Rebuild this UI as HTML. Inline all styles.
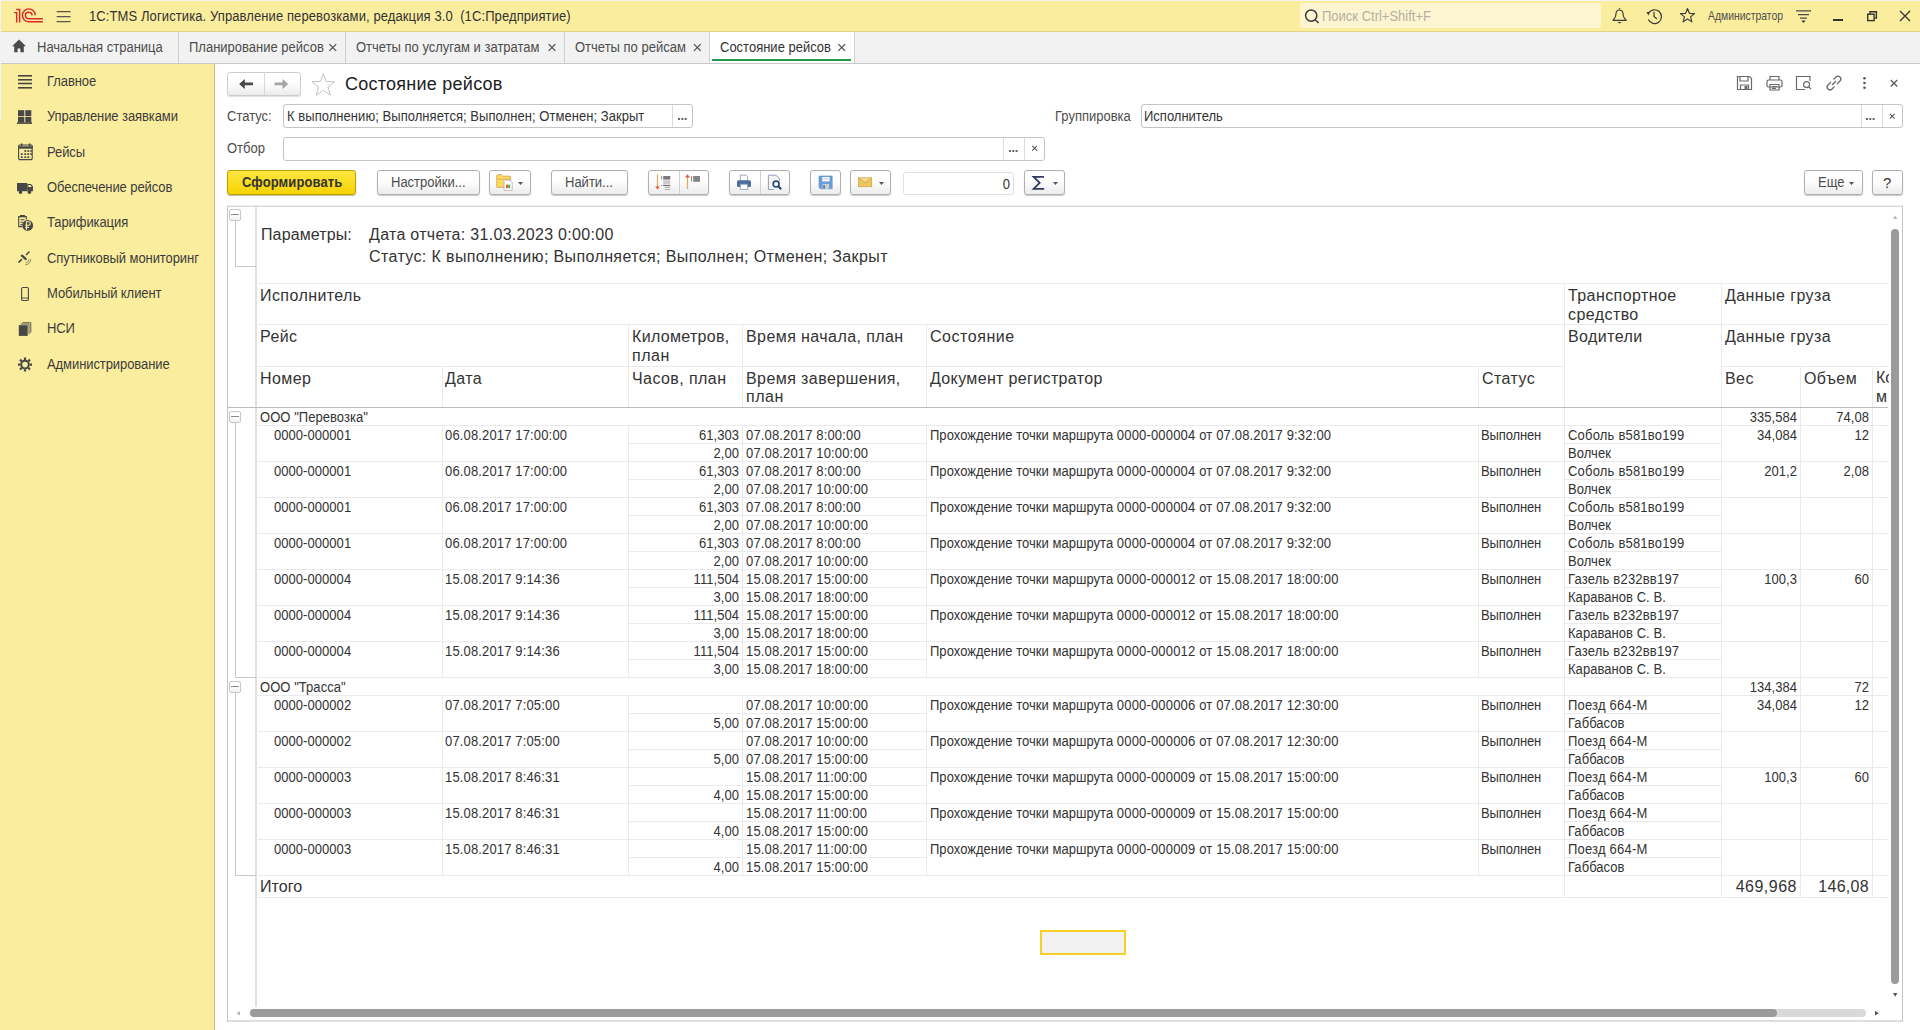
<!DOCTYPE html>
<html><head><meta charset="utf-8"><style>
*{box-sizing:border-box;margin:0;padding:0}
html,body{width:1920px;height:1030px;overflow:hidden;background:#fff;font-family:"Liberation Sans",sans-serif;color:#4d4d4d;font-size:13px}
.a{position:absolute}
svg.a{overflow:visible}
.t{position:absolute;white-space:pre}
.btn{position:absolute;border:1px solid #b0b0b0;border-radius:3px;background:linear-gradient(#ffffff 40%,#ececec);box-shadow:0 1px 1px rgba(0,0,0,.22)}
.inp{position:absolute;border:1px solid #c4c4c4;border-radius:3px;background:#fff}
</style></head><body>
<div class="a" style="left:0px;top:0px;width:1920px;height:32px;background:#fbed9e"></div>
<div class="a" style="left:0px;top:31px;width:1920px;height:1px;background:#e2d28a"></div>
<svg class="a" style="left:0px;top:0px;" width="50" height="32" viewBox="0 0 50 32"><g fill="none" stroke="#dc2a2a" stroke-width="1.45"><path d="M14,12.6 H16.7 V22.6"/><path d="M16.2,9.4 H19.65 V22.6"/><path d="M35.3,15.35 A6.45,6.45 0 1 0 28.85,21.8 H42.9"/><path d="M32,15.5 A3.3,3.3 0 1 0 28.7,18.8 H42.9"/></g></svg>
<svg class="a" style="left:0px;top:0px;" width="80" height="32" viewBox="0 0 80 32"><g stroke="#5a5648" stroke-width="1.25"><path d="M56.7,11.5H70.6M56.7,16.5H70.6M56.7,21.5H70.6"/></g></svg>
<div class="t" style="top:9px;font-size:14px;line-height:14px;color:#333333;left:89px;transform:scaleX(0.928571);transform-origin:0 0;letter-spacing:0.108px;">1C:TMS Логистика. Управление перевозками, редакция 3.0  (1С:Предприятие)</div>
<div class="a" style="left:1300px;top:3px;width:301px;height:25px;background:#fdf5d2;border-radius:3px"></div>
<svg class="a" style="left:1300px;top:0px;" width="30" height="32" viewBox="0 0 30 32"><g fill="none" stroke="#3a3a3a" stroke-width="1.5"><circle cx="11.2" cy="15.6" r="5.6"/><path d="M15.3,19.7 L18.6,23"/></g></svg>
<div class="t" style="top:9px;font-size:14px;line-height:14px;color:#b4b0a0;left:1322px;transform:scaleX(0.928571);transform-origin:0 0;">Поиск Ctrl+Shift+F</div>
<svg class="a" style="left:0px;top:0px;" width="1" height="1" viewBox="0 0 1 1"><g fill="none" stroke="#3a3a3a" stroke-width="1.15" stroke-linejoin="round"><path d="M1613,20.3 L1614.8,17.8 C1615.6,16.6 1615.9,15.5 1616,13.6 C1616.2,11.5 1617.6,10 1619.5,10 C1621.4,10 1622.8,11.5 1623,13.6 C1623.1,15.5 1623.4,16.6 1624.2,17.8 L1626.2,20.3 Z"/></g><path d="M1618.5,8.2 L1620.5,8.2 L1619.5,9.6Z" fill="#3a3a3a"/><path d="M1617.2,22.1 H1621.8 L1619.5,23.4Z" fill="#3a3a3a"/></svg>
<svg class="a" style="left:0px;top:0px;" width="1" height="1" viewBox="0 0 1 1"><g fill="none" stroke="#3a3a3a" stroke-width="1.2"><path d="M1648.6,13.2 A6.9,6.9 0 1 1 1648.3,19.6"/><path d="M1654,11.8 V16.4 L1656.9,19"/></g><path d="M1646.2,12.6 L1649.8,11.6 L1648.8,15.2Z" fill="#3a3a3a"/></svg>
<svg class="a" style="left:0px;top:0px;" width="1" height="1" viewBox="0 0 1 1"><polygon points="1687.50,8.50 1689.38,13.31 1694.54,13.61 1690.54,16.89 1691.85,21.89 1687.50,19.10 1683.15,21.89 1684.46,16.89 1680.46,13.61 1685.62,13.31" fill="none" stroke="#3a3a3a" stroke-width="1.15" stroke-linejoin="round"/></svg>
<div class="t" style="top:9px;font-size:13px;line-height:13px;color:#4d4d4d;left:1708px;transform:scaleX(0.80);transform-origin:0 0;">Администратор</div>
<svg class="a" style="left:1790px;top:0px;" width="30" height="32" viewBox="0 0 30 32"><g stroke="#4a4a4a" stroke-width="1.3"><path d="M6,10.8H21M8,14.6H19M10,18.2H17"/></g><path d="M11.3,20.6 h4.4 l-2.2,2.4z" fill="#3a3a3a"/></svg>
<div class="a" style="left:1833px;top:19px;width:10px;height:2px;background:#333"></div>
<svg class="a" style="left:1860px;top:0px;" width="30" height="32" viewBox="0 0 30 32"><g fill="none" stroke="#333" stroke-width="1.4"><rect x="7.7" y="14.2" width="6.4" height="6.4"/><path d="M10,14 V11.7 H16.4 V18.1 H14.2"/></g></svg>
<svg class="a" style="left:1895px;top:0px;" width="30" height="32" viewBox="0 0 30 32"><g stroke="#333" stroke-width="1.3"><path d="M5,11 L15,21 M15,11 L5,21"/></g></svg>
<div class="a" style="left:0px;top:32px;width:1920px;height:32px;background:#f2f2f2"></div>
<div class="a" style="left:0px;top:63px;width:1920px;height:1px;background:#c8c8c8"></div>
<svg class="a" style="left:0px;top:32px;" width="40" height="32" viewBox="0 0 40 32"><path d="M19,7.5 L12,14.3 H14.2 V20.2 H17.6 V16.6 H20.4 V20.2 H23.8 V14.3 H26 Z" fill="#4a4a4a"/></svg>
<div class="t" style="top:40px;font-size:14px;line-height:14px;color:#4d4d4d;left:37px;transform:scaleX(0.928571);transform-origin:0 0;">Начальная страница</div>
<div class="a" style="left:710px;top:32px;width:144px;height:31px;background:#ffffff"></div>
<div class="a" style="left:178px;top:32px;width:1px;height:31px;background:#cfcfcf"></div>
<div class="a" style="left:345px;top:32px;width:1px;height:31px;background:#cfcfcf"></div>
<div class="a" style="left:564px;top:32px;width:1px;height:31px;background:#cfcfcf"></div>
<div class="a" style="left:709px;top:32px;width:1px;height:31px;background:#cfcfcf"></div>
<div class="a" style="left:854px;top:32px;width:1px;height:31px;background:#cfcfcf"></div>
<div class="t" style="top:40px;font-size:14px;line-height:14px;color:#4d4d4d;left:189px;transform:scaleX(0.928571);transform-origin:0 0;">Планирование рейсов</div>
<div class="t" style="top:40px;font-size:14px;line-height:14px;color:#4d4d4d;left:356px;transform:scaleX(0.928571);transform-origin:0 0;">Отчеты по услугам и затратам</div>
<div class="t" style="top:40px;font-size:14px;line-height:14px;color:#4d4d4d;left:575px;transform:scaleX(0.928571);transform-origin:0 0;">Отчеты по рейсам</div>
<div class="t" style="top:40px;font-size:14px;line-height:14px;color:#333333;left:720px;transform:scaleX(0.928571);transform-origin:0 0;">Состояние рейсов</div>
<svg class="a" style="left:322px;top:37px;" width="20" height="20" viewBox="0 0 20 20"><path d="M7.400000000000011,7.1 l6.8,6.8 M14.200000000000012,7.1 l-6.8,6.8" stroke="#505050" stroke-width="1.25"/></svg>
<svg class="a" style="left:542px;top:37px;" width="20" height="20" viewBox="0 0 20 20"><path d="M6.6,7.1 l6.8,6.8 M13.4,7.1 l-6.8,6.8" stroke="#505050" stroke-width="1.25"/></svg>
<svg class="a" style="left:687px;top:37px;" width="20" height="20" viewBox="0 0 20 20"><path d="M6.899999999999954,7.1 l6.8,6.8 M13.699999999999955,7.1 l-6.8,6.8" stroke="#505050" stroke-width="1.25"/></svg>
<svg class="a" style="left:831px;top:37px;" width="20" height="20" viewBox="0 0 20 20"><path d="M7.300000000000045,7.1 l6.8,6.8 M14.100000000000046,7.1 l-6.8,6.8" stroke="#505050" stroke-width="1.25"/></svg>
<div class="a" style="left:712px;top:59px;width:139px;height:2px;background:#1f9a4a"></div>
<div class="a" style="left:0px;top:64px;width:214px;height:966px;background:#fbed9e"></div>
<div class="a" style="left:214px;top:64px;width:1px;height:966px;background:#cdbd7c"></div>
<div class="t" style="top:74px;font-size:14px;line-height:14px;color:#3c3c3c;left:47px;transform:scaleX(0.928571);transform-origin:0 0;letter-spacing:-0.086px;">Главное</div>
<div class="t" style="top:109px;font-size:14px;line-height:14px;color:#3c3c3c;left:47px;transform:scaleX(0.928571);transform-origin:0 0;letter-spacing:-0.086px;">Управление заявками</div>
<div class="t" style="top:145px;font-size:14px;line-height:14px;color:#3c3c3c;left:47px;transform:scaleX(0.928571);transform-origin:0 0;letter-spacing:-0.086px;">Рейсы</div>
<div class="t" style="top:180px;font-size:14px;line-height:14px;color:#3c3c3c;left:47px;transform:scaleX(0.928571);transform-origin:0 0;letter-spacing:-0.086px;">Обеспечение рейсов</div>
<div class="t" style="top:215px;font-size:14px;line-height:14px;color:#3c3c3c;left:47px;transform:scaleX(0.928571);transform-origin:0 0;letter-spacing:-0.086px;">Тарификация</div>
<div class="t" style="top:251px;font-size:14px;line-height:14px;color:#3c3c3c;left:47px;transform:scaleX(0.928571);transform-origin:0 0;letter-spacing:-0.086px;">Спутниковый мониторинг</div>
<div class="t" style="top:286px;font-size:14px;line-height:14px;color:#3c3c3c;left:47px;transform:scaleX(0.928571);transform-origin:0 0;letter-spacing:-0.086px;">Мобильный клиент</div>
<div class="t" style="top:321px;font-size:14px;line-height:14px;color:#3c3c3c;left:47px;transform:scaleX(0.928571);transform-origin:0 0;letter-spacing:-0.086px;">НСИ</div>
<div class="t" style="top:357px;font-size:14px;line-height:14px;color:#3c3c3c;left:47px;transform:scaleX(0.928571);transform-origin:0 0;letter-spacing:-0.086px;">Администрирование</div>
<div class="btn" style="left:227px;top:71.5px;width:74px;height:24.5px;border-color:#cdcdcd;box-shadow:0 1px 1px rgba(0,0,0,.12)"></div>
<div class="a" style="left:264px;top:72px;width:1px;height:23px;background:#d8d8d8"></div>
<svg class="a" style="left:227px;top:72px;" width="74" height="24" viewBox="0 0 74 24"><path d="M12.1,11.9 L17.8,6.9 V10.55 H26 V13.25 H17.8 V16.9 Z" fill="#4a4a4a"/><path d="M61.2,11.9 L55.5,6.9 V10.55 H47.5 V13.25 H55.5 V16.9 Z" fill="#a4a4a4"/></svg>
<svg class="a" style="left:0px;top:0px;" width="1" height="1" viewBox="0 0 1 1"><polygon points="323.30,73.50 326.18,81.44 334.62,81.72 327.96,86.91 330.29,95.03 323.30,90.30 316.31,95.03 318.64,86.91 311.98,81.72 320.42,81.44" fill="none" stroke="#c4c4c4" stroke-width="1"/></svg>
<div class="t" style="top:75px;font-size:18px;line-height:18px;color:#1c1c1c;left:345px;letter-spacing:0.250px;">Состояние рейсов</div>
<svg class="a" style="left:1730px;top:70px;" width="30" height="26" viewBox="0 0 30 26"><g fill="none" stroke="#6a6a6a" stroke-width="1.2"><path d="M7.5,6.5 H19.5 L21.5,8.5 V19.5 H7.5 Z"/><path d="M10,6.5 V11 H18 V6.5"/><path d="M10.5,19.5 V15 H18.5 V19.5"/></g><rect x="14.5" y="16" width="3" height="3" fill="#6a6a6a"/></svg>
<svg class="a" style="left:1760px;top:70px;" width="30" height="26" viewBox="0 0 30 26"><g fill="none" stroke="#6a6a6a" stroke-width="1.2"><path d="M10,10 V6.5 H19 V10"/><rect x="7" y="10" width="15" height="7" rx="1.5"/><path d="M10,14.5 H19 V20 H10 Z"/><path d="M12,16.5 H17 M12,18.3 H16"/></g></svg>
<svg class="a" style="left:1790px;top:70px;" width="30" height="26" viewBox="0 0 30 26"><g fill="none" stroke="#6a6a6a" stroke-width="1.2"><path d="M15,19.5 H6.5 V6.5 H20 V11"/><circle cx="16.6" cy="14.6" r="3"/><path d="M18.8,16.8 L21,19"/></g></svg>
<svg class="a" style="left:1820px;top:70px;" width="30" height="26" viewBox="0 0 30 26"><g fill="none" stroke="#6a6a6a" stroke-width="1.3"><path d="M13.5,9.5 L16,7 A2.6,2.6 0 0 1 20,11 L17,14"/><path d="M14.5,16.5 L12,19 A2.6,2.6 0 0 1 8,15 L11,12"/><path d="M12,15 L16,11"/></g></svg>
<svg class="a" style="left:1855px;top:70px;" width="20" height="26" viewBox="0 0 20 26"><g fill="#555"><circle cx="9.5" cy="8.2" r="1.3"/><circle cx="9.5" cy="13" r="1.3"/><circle cx="9.5" cy="17.8" r="1.3"/></g></svg>
<svg class="a" style="left:1884px;top:70px;" width="20" height="26" viewBox="0 0 20 26"><path d="M6.8,10 L13.2,16.5 M13.2,10 L6.8,16.5" stroke="#555" stroke-width="1.2"/></svg>
<div class="t" style="top:109px;font-size:14px;line-height:14px;color:#4d4d4d;left:227px;transform:scaleX(0.928571);transform-origin:0 0;">Статус:</div>
<div class="inp" style="left:283px;top:104px;width:410px;height:24px;"></div>
<div class="a" style="left:672px;top:105px;width:1px;height:22px;background:#dcdcdc"></div>
<div class="t" style="top:109px;font-size:14px;line-height:14px;color:#333333;left:287px;transform:scaleX(0.928571);transform-origin:0 0;letter-spacing:0.054px;">К выполнению; Выполняется; Выполнен; Отменен; Закрыт</div>
<svg class="a" style="left:678px;top:118px;" width="12" height="4" viewBox="0 0 12 4"><g fill="#666"><rect x="0" y="0" width="2" height="2"/><rect x="3.3" y="0" width="2" height="2"/><rect x="6.6" y="0" width="2" height="2"/></g></svg>
<div class="t" style="top:109px;font-size:14px;line-height:14px;color:#4d4d4d;left:1055px;transform:scaleX(0.928571);transform-origin:0 0;">Группировка</div>
<div class="inp" style="left:1141px;top:104px;width:762px;height:24px;"></div>
<div class="a" style="left:1861px;top:105px;width:1px;height:22px;background:#dcdcdc"></div>
<div class="a" style="left:1882px;top:105px;width:1px;height:22px;background:#dcdcdc"></div>
<div class="t" style="top:109px;font-size:14px;line-height:14px;color:#333333;left:1144px;transform:scaleX(0.928571);transform-origin:0 0;">Исполнитель</div>
<svg class="a" style="left:1866px;top:118px;" width="12" height="4" viewBox="0 0 12 4"><g fill="#666"><rect x="0" y="0" width="2" height="2"/><rect x="3.3" y="0" width="2" height="2"/><rect x="6.6" y="0" width="2" height="2"/></g></svg>
<svg class="a" style="left:1882px;top:105px;" width="21" height="23" viewBox="0 0 21 23"><path d="M7.8,8.8 L12.6,13.6 M12.6,8.8 L7.8,13.6" stroke="#555" stroke-width="1.1"/></svg>
<div class="t" style="top:141px;font-size:14px;line-height:14px;color:#4d4d4d;left:227px;transform:scaleX(0.928571);transform-origin:0 0;">Отбор</div>
<div class="inp" style="left:283px;top:137px;width:762px;height:24px;"></div>
<div class="a" style="left:1003px;top:138px;width:1px;height:22px;background:#dcdcdc"></div>
<div class="a" style="left:1024px;top:138px;width:1px;height:22px;background:#dcdcdc"></div>
<svg class="a" style="left:1009px;top:150px;" width="12" height="4" viewBox="0 0 12 4"><g fill="#666"><rect x="0" y="0" width="2" height="2"/><rect x="3.3" y="0" width="2" height="2"/><rect x="6.6" y="0" width="2" height="2"/></g></svg>
<svg class="a" style="left:1024px;top:137px;" width="21" height="23" viewBox="0 0 21 23"><path d="M8.2,8.8 L13,13.6 M13,8.8 L8.2,13.6" stroke="#555" stroke-width="1.1"/></svg>
<div class="a" style="left:227px;top:170px;width:129px;height:25px;border:1px solid #b9a000;border-radius:3px;background:linear-gradient(#ffe641,#f5d300);box-shadow:0 1px 1px rgba(80,70,0,.35)"></div>
<div class="t" style="top:175px;font-size:14px;line-height:14px;color:#333333;left:242px;transform:scaleX(0.928571);transform-origin:0 0;font-weight:bold;letter-spacing:0.129px;">Сформировать</div>
<div class="btn" style="left:377px;top:170px;width:103px;height:25px;"></div>
<div class="t" style="top:175px;font-size:14px;line-height:14px;color:#4d4d4d;left:391px;transform:scaleX(0.928571);transform-origin:0 0;">Настройки...</div>
<div class="btn" style="left:489px;top:170px;width:42px;height:25px;"></div>
<div class="btn" style="left:551px;top:170px;width:77px;height:25px;"></div>
<div class="t" style="top:175px;font-size:14px;line-height:14px;color:#4d4d4d;left:565px;transform:scaleX(0.928571);transform-origin:0 0;">Найти...</div>
<div class="btn" style="left:648px;top:170px;width:61px;height:25px;"></div>
<div class="a" style="left:679px;top:171px;width:1px;height:23px;background:#d0d0d0"></div>
<div class="btn" style="left:729px;top:170px;width:61px;height:25px;"></div>
<div class="a" style="left:760px;top:171px;width:1px;height:23px;background:#d0d0d0"></div>
<div class="btn" style="left:810px;top:170px;width:31px;height:25px;"></div>
<div class="btn" style="left:850px;top:170px;width:41px;height:25px;"></div>
<div class="inp" style="left:903px;top:172px;width:111px;height:23px;border-color:#e0e0e0"></div>
<div class="t" style="top:177px;font-size:14px;line-height:14px;color:#333333;left:410px;width:600px;text-align:right;transform:scaleX(0.928571);transform-origin:100% 0;">0</div>
<div class="btn" style="left:1024px;top:170px;width:41px;height:25px;"></div>
<div class="btn" style="left:1804px;top:170px;width:59px;height:25px;"></div>
<div class="t" style="top:175px;font-size:14px;line-height:14px;color:#4d4d4d;left:1818px;transform:scaleX(0.928571);transform-origin:0 0;">Еще</div>
<div class="btn" style="left:1872px;top:170px;width:31px;height:25px;"></div>
<div class="t" style="top:175px;font-size:15px;line-height:15px;color:#333333;left:1883px;">?</div>
<svg class="a" style="left:518px;top:182px;" width="6" height="4" viewBox="0 0 6 4"><path d="M0,0 H5 L2.5,3z" fill="#555"/></svg>
<svg class="a" style="left:879px;top:182px;" width="6" height="4" viewBox="0 0 6 4"><path d="M0,0 H5 L2.5,3z" fill="#555"/></svg>
<svg class="a" style="left:1053px;top:182px;" width="6" height="4" viewBox="0 0 6 4"><path d="M0,0 H5 L2.5,3z" fill="#555"/></svg>
<svg class="a" style="left:1849px;top:182px;" width="6" height="4" viewBox="0 0 6 4"><path d="M0,0 H5 L2.5,3z" fill="#555"/></svg>
<svg class="a" style="left:0px;top:0px;" width="1" height="1" viewBox="0 0 1 1"><path d="M1044,176.8 H1033.6 L1039.7,182.8 L1033.6,188.9 H1044.2" fill="none" stroke="#2d3c5e" stroke-width="1.8" stroke-linejoin="miter"/></svg>
<div class="a" style="left:227px;top:206px;width:676px;height:0px;"></div>
<div class="a" style="left:227px;top:206px;width:676px;height:816px;"></div>
<div class="a" style="left:227px;top:205px;width:1676px;height:1px;background:#ececec"></div>
<div class="a" style="left:227px;top:206px;width:1676px;height:1px;background:#d9d9d9"></div>
<div class="a" style="left:227px;top:1020px;width:1676px;height:2px;background:#dedede"></div>
<div class="a" style="left:227px;top:206px;width:1px;height:816px;background:#c4c4c4"></div>
<div class="a" style="left:1902px;top:206px;width:1px;height:816px;background:#c4c4c4"></div>
<div class="a" style="left:255px;top:207px;width:2px;height:800px;background:#e0e0e0"></div>
<div class="t" style="top:227px;font-size:16px;line-height:16px;color:#333333;left:261px;letter-spacing:0.120px;">Параметры:</div>
<div class="t" style="top:227px;font-size:16px;line-height:16px;color:#333333;left:369px;letter-spacing:0.300px;">Дата отчета: 31.03.2023 0:00:00</div>
<div class="t" style="top:249px;font-size:16px;line-height:16px;color:#333333;left:369px;letter-spacing:0.380px;">Статус: К выполнению; Выполняется; Выполнен; Отменен; Закрыт</div>
<div class="a" style="left:256px;top:283px;width:1632px;height:1px;background:#eaeaea"></div>
<div class="a" style="left:256px;top:324px;width:1632px;height:1px;background:#eaeaea"></div>
<div class="a" style="left:256px;top:366px;width:1308px;height:1px;background:#eaeaea"></div>
<div class="a" style="left:1721px;top:366px;width:167px;height:1px;background:#eaeaea"></div>
<div class="a" style="left:228px;top:407px;width:1660px;height:1px;background:#bdbdbd"></div>
<div class="a" style="left:1564px;top:283px;width:1px;height:124px;background:#eaeaea"></div>
<div class="a" style="left:1721px;top:283px;width:1px;height:124px;background:#eaeaea"></div>
<div class="a" style="left:628px;top:324px;width:1px;height:83px;background:#eaeaea"></div>
<div class="a" style="left:742px;top:324px;width:1px;height:83px;background:#eaeaea"></div>
<div class="a" style="left:926px;top:324px;width:1px;height:83px;background:#eaeaea"></div>
<div class="a" style="left:442px;top:366px;width:1px;height:41px;background:#eaeaea"></div>
<div class="a" style="left:1478px;top:366px;width:1px;height:41px;background:#eaeaea"></div>
<div class="a" style="left:1800px;top:366px;width:1px;height:41px;background:#eaeaea"></div>
<div class="a" style="left:1872px;top:366px;width:1px;height:41px;background:#eaeaea"></div>
<div class="t" style="top:288px;font-size:16px;line-height:16px;color:#333333;left:260px;letter-spacing:0.420px;">Исполнитель</div>
<div class="t" style="top:288px;font-size:16px;line-height:16px;color:#333333;left:1568px;letter-spacing:0.420px;">Транспортное</div>
<div class="t" style="top:307px;font-size:16px;line-height:16px;color:#333333;left:1568px;letter-spacing:0.420px;">средство</div>
<div class="t" style="top:288px;font-size:16px;line-height:16px;color:#333333;left:1725px;letter-spacing:0.420px;">Данные груза</div>
<div class="t" style="top:329px;font-size:16px;line-height:16px;color:#333333;left:260px;letter-spacing:0.420px;">Рейс</div>
<div class="t" style="top:329px;font-size:16px;line-height:16px;color:#333333;left:632px;letter-spacing:0.320px;">Километров,</div>
<div class="t" style="top:348px;font-size:16px;line-height:16px;color:#333333;left:632px;letter-spacing:0.550px;">план</div>
<div class="t" style="top:329px;font-size:16px;line-height:16px;color:#333333;left:746px;letter-spacing:0.420px;">Время начала, план</div>
<div class="t" style="top:329px;font-size:16px;line-height:16px;color:#333333;left:930px;letter-spacing:0.540px;">Состояние</div>
<div class="t" style="top:329px;font-size:16px;line-height:16px;color:#333333;left:1568px;letter-spacing:0.420px;">Водители</div>
<div class="t" style="top:329px;font-size:16px;line-height:16px;color:#333333;left:1725px;letter-spacing:0.420px;">Данные груза</div>
<div class="t" style="top:371px;font-size:16px;line-height:16px;color:#333333;left:260px;letter-spacing:0.420px;">Номер</div>
<div class="t" style="top:371px;font-size:16px;line-height:16px;color:#333333;left:445px;letter-spacing:0.420px;">Дата</div>
<div class="t" style="top:371px;font-size:16px;line-height:16px;color:#333333;left:632px;letter-spacing:0.420px;">Часов, план</div>
<div class="t" style="top:371px;font-size:16px;line-height:16px;color:#333333;left:746px;letter-spacing:0.420px;">Время завершения,</div>
<div class="t" style="top:389px;font-size:16px;line-height:16px;color:#333333;left:746px;letter-spacing:0.550px;">план</div>
<div class="t" style="top:371px;font-size:16px;line-height:16px;color:#333333;left:930px;letter-spacing:0.350px;">Документ регистратор</div>
<div class="t" style="top:371px;font-size:16px;line-height:16px;color:#333333;left:1482px;letter-spacing:0.420px;">Статус</div>
<div class="t" style="top:371px;font-size:16px;line-height:16px;color:#333333;left:1725px;letter-spacing:0.420px;">Вес</div>
<div class="t" style="top:371px;font-size:16px;line-height:16px;color:#333333;left:1804px;letter-spacing:0.420px;">Объем</div>
<div class="a" style="left:1872px;top:366px;width:16.5px;height:41px;overflow:hidden"><div class="t" style="left:4px;top:4px;font-size:16px;line-height:16px;color:#333">Ко</div><div class="t" style="left:4px;top:23px;font-size:16px;line-height:16px;color:#333">м</div></div>
<div class="a" style="left:1564px;top:408px;width:1px;height:17px;background:#eaeaea"></div>
<div class="a" style="left:1721px;top:408px;width:1px;height:17px;background:#eaeaea"></div>
<div class="a" style="left:1800px;top:408px;width:1px;height:17px;background:#eaeaea"></div>
<div class="a" style="left:1872px;top:408px;width:1px;height:17px;background:#eaeaea"></div>
<div class="t" style="top:410px;font-size:14px;line-height:14px;color:#333333;left:260px;transform:scaleX(0.928571);transform-origin:0 0;letter-spacing:0.054px;">ООО "Перевозка"</div>
<div class="t" style="top:410px;font-size:14px;line-height:14px;color:#333333;left:1197px;width:600px;text-align:right;transform:scaleX(0.928571);transform-origin:100% 0;letter-spacing:0.054px;">335,584</div>
<div class="t" style="top:410px;font-size:14px;line-height:14px;color:#333333;left:1269px;width:600px;text-align:right;transform:scaleX(0.928571);transform-origin:100% 0;letter-spacing:0.054px;">74,08</div>
<div class="a" style="left:256px;top:425px;width:1632px;height:1px;background:#eaeaea"></div>
<div class="a" style="left:442px;top:426px;width:1px;height:35px;background:#eaeaea"></div>
<div class="a" style="left:628px;top:426px;width:1px;height:35px;background:#eaeaea"></div>
<div class="a" style="left:742px;top:426px;width:1px;height:35px;background:#eaeaea"></div>
<div class="a" style="left:926px;top:426px;width:1px;height:35px;background:#eaeaea"></div>
<div class="a" style="left:1478px;top:426px;width:1px;height:35px;background:#eaeaea"></div>
<div class="a" style="left:1564px;top:426px;width:1px;height:35px;background:#eaeaea"></div>
<div class="a" style="left:1721px;top:426px;width:1px;height:35px;background:#eaeaea"></div>
<div class="a" style="left:1800px;top:426px;width:1px;height:35px;background:#eaeaea"></div>
<div class="a" style="left:1872px;top:426px;width:1px;height:35px;background:#eaeaea"></div>
<div class="a" style="left:628px;top:443px;width:298px;height:1px;background:#eaeaea"></div>
<div class="a" style="left:1564px;top:443px;width:157px;height:1px;background:#eaeaea"></div>
<div class="t" style="top:428px;font-size:14px;line-height:14px;color:#333333;left:274px;transform:scaleX(0.928571);transform-origin:0 0;letter-spacing:0.054px;">0000-000001</div>
<div class="t" style="top:428px;font-size:14px;line-height:14px;color:#333333;left:445px;transform:scaleX(0.928571);transform-origin:0 0;letter-spacing:0.162px;">06.08.2017 17:00:00</div>
<div class="t" style="top:428px;font-size:14px;line-height:14px;color:#333333;left:139px;width:600px;text-align:right;transform:scaleX(0.928571);transform-origin:100% 0;letter-spacing:0.054px;">61,303</div>
<div class="t" style="top:446px;font-size:14px;line-height:14px;color:#333333;left:139px;width:600px;text-align:right;transform:scaleX(0.928571);transform-origin:100% 0;letter-spacing:0.054px;">2,00</div>
<div class="t" style="top:428px;font-size:14px;line-height:14px;color:#333333;left:746px;transform:scaleX(0.928571);transform-origin:0 0;letter-spacing:0.162px;">07.08.2017 8:00:00</div>
<div class="t" style="top:446px;font-size:14px;line-height:14px;color:#333333;left:746px;transform:scaleX(0.928571);transform-origin:0 0;letter-spacing:0.162px;">07.08.2017 10:00:00</div>
<div class="t" style="top:428px;font-size:14px;line-height:14px;color:#333333;left:930px;transform:scaleX(0.928571);transform-origin:0 0;"><span style="letter-spacing:0.032px">Прохождение точки маршрута </span><span style="letter-spacing:0.183px">0000-000004 от 07.08.2017 9:32:00</span></div>
<div class="t" style="top:428px;font-size:14px;line-height:14px;color:#333333;left:1481px;transform:scaleX(0.928571);transform-origin:0 0;letter-spacing:-0.140px;">Выполнен</div>
<div class="t" style="top:428px;font-size:14px;line-height:14px;color:#333333;left:1568px;transform:scaleX(0.928571);transform-origin:0 0;letter-spacing:0.215px;">Соболь в581во199</div>
<div class="t" style="top:446px;font-size:14px;line-height:14px;color:#333333;left:1568px;transform:scaleX(0.928571);transform-origin:0 0;letter-spacing:0.054px;">Волчек</div>
<div class="t" style="top:428px;font-size:14px;line-height:14px;color:#333333;left:1197px;width:600px;text-align:right;transform:scaleX(0.928571);transform-origin:100% 0;letter-spacing:0.054px;">34,084</div>
<div class="t" style="top:428px;font-size:14px;line-height:14px;color:#333333;left:1269px;width:600px;text-align:right;transform:scaleX(0.928571);transform-origin:100% 0;letter-spacing:0.054px;">12</div>
<div class="a" style="left:256px;top:461px;width:1632px;height:1px;background:#eaeaea"></div>
<div class="a" style="left:442px;top:462px;width:1px;height:35px;background:#eaeaea"></div>
<div class="a" style="left:628px;top:462px;width:1px;height:35px;background:#eaeaea"></div>
<div class="a" style="left:742px;top:462px;width:1px;height:35px;background:#eaeaea"></div>
<div class="a" style="left:926px;top:462px;width:1px;height:35px;background:#eaeaea"></div>
<div class="a" style="left:1478px;top:462px;width:1px;height:35px;background:#eaeaea"></div>
<div class="a" style="left:1564px;top:462px;width:1px;height:35px;background:#eaeaea"></div>
<div class="a" style="left:1721px;top:462px;width:1px;height:35px;background:#eaeaea"></div>
<div class="a" style="left:1800px;top:462px;width:1px;height:35px;background:#eaeaea"></div>
<div class="a" style="left:1872px;top:462px;width:1px;height:35px;background:#eaeaea"></div>
<div class="a" style="left:628px;top:479px;width:298px;height:1px;background:#eaeaea"></div>
<div class="a" style="left:1564px;top:479px;width:157px;height:1px;background:#eaeaea"></div>
<div class="t" style="top:464px;font-size:14px;line-height:14px;color:#333333;left:274px;transform:scaleX(0.928571);transform-origin:0 0;letter-spacing:0.054px;">0000-000001</div>
<div class="t" style="top:464px;font-size:14px;line-height:14px;color:#333333;left:445px;transform:scaleX(0.928571);transform-origin:0 0;letter-spacing:0.162px;">06.08.2017 17:00:00</div>
<div class="t" style="top:464px;font-size:14px;line-height:14px;color:#333333;left:139px;width:600px;text-align:right;transform:scaleX(0.928571);transform-origin:100% 0;letter-spacing:0.054px;">61,303</div>
<div class="t" style="top:482px;font-size:14px;line-height:14px;color:#333333;left:139px;width:600px;text-align:right;transform:scaleX(0.928571);transform-origin:100% 0;letter-spacing:0.054px;">2,00</div>
<div class="t" style="top:464px;font-size:14px;line-height:14px;color:#333333;left:746px;transform:scaleX(0.928571);transform-origin:0 0;letter-spacing:0.162px;">07.08.2017 8:00:00</div>
<div class="t" style="top:482px;font-size:14px;line-height:14px;color:#333333;left:746px;transform:scaleX(0.928571);transform-origin:0 0;letter-spacing:0.162px;">07.08.2017 10:00:00</div>
<div class="t" style="top:464px;font-size:14px;line-height:14px;color:#333333;left:930px;transform:scaleX(0.928571);transform-origin:0 0;"><span style="letter-spacing:0.032px">Прохождение точки маршрута </span><span style="letter-spacing:0.183px">0000-000004 от 07.08.2017 9:32:00</span></div>
<div class="t" style="top:464px;font-size:14px;line-height:14px;color:#333333;left:1481px;transform:scaleX(0.928571);transform-origin:0 0;letter-spacing:-0.140px;">Выполнен</div>
<div class="t" style="top:464px;font-size:14px;line-height:14px;color:#333333;left:1568px;transform:scaleX(0.928571);transform-origin:0 0;letter-spacing:0.215px;">Соболь в581во199</div>
<div class="t" style="top:482px;font-size:14px;line-height:14px;color:#333333;left:1568px;transform:scaleX(0.928571);transform-origin:0 0;letter-spacing:0.054px;">Волчек</div>
<div class="t" style="top:464px;font-size:14px;line-height:14px;color:#333333;left:1197px;width:600px;text-align:right;transform:scaleX(0.928571);transform-origin:100% 0;letter-spacing:0.054px;">201,2</div>
<div class="t" style="top:464px;font-size:14px;line-height:14px;color:#333333;left:1269px;width:600px;text-align:right;transform:scaleX(0.928571);transform-origin:100% 0;letter-spacing:0.054px;">2,08</div>
<div class="a" style="left:256px;top:497px;width:1632px;height:1px;background:#eaeaea"></div>
<div class="a" style="left:442px;top:498px;width:1px;height:35px;background:#eaeaea"></div>
<div class="a" style="left:628px;top:498px;width:1px;height:35px;background:#eaeaea"></div>
<div class="a" style="left:742px;top:498px;width:1px;height:35px;background:#eaeaea"></div>
<div class="a" style="left:926px;top:498px;width:1px;height:35px;background:#eaeaea"></div>
<div class="a" style="left:1478px;top:498px;width:1px;height:35px;background:#eaeaea"></div>
<div class="a" style="left:1564px;top:498px;width:1px;height:35px;background:#eaeaea"></div>
<div class="a" style="left:1721px;top:498px;width:1px;height:35px;background:#eaeaea"></div>
<div class="a" style="left:1800px;top:498px;width:1px;height:35px;background:#eaeaea"></div>
<div class="a" style="left:1872px;top:498px;width:1px;height:35px;background:#eaeaea"></div>
<div class="a" style="left:628px;top:515px;width:298px;height:1px;background:#eaeaea"></div>
<div class="a" style="left:1564px;top:515px;width:157px;height:1px;background:#eaeaea"></div>
<div class="t" style="top:500px;font-size:14px;line-height:14px;color:#333333;left:274px;transform:scaleX(0.928571);transform-origin:0 0;letter-spacing:0.054px;">0000-000001</div>
<div class="t" style="top:500px;font-size:14px;line-height:14px;color:#333333;left:445px;transform:scaleX(0.928571);transform-origin:0 0;letter-spacing:0.162px;">06.08.2017 17:00:00</div>
<div class="t" style="top:500px;font-size:14px;line-height:14px;color:#333333;left:139px;width:600px;text-align:right;transform:scaleX(0.928571);transform-origin:100% 0;letter-spacing:0.054px;">61,303</div>
<div class="t" style="top:518px;font-size:14px;line-height:14px;color:#333333;left:139px;width:600px;text-align:right;transform:scaleX(0.928571);transform-origin:100% 0;letter-spacing:0.054px;">2,00</div>
<div class="t" style="top:500px;font-size:14px;line-height:14px;color:#333333;left:746px;transform:scaleX(0.928571);transform-origin:0 0;letter-spacing:0.162px;">07.08.2017 8:00:00</div>
<div class="t" style="top:518px;font-size:14px;line-height:14px;color:#333333;left:746px;transform:scaleX(0.928571);transform-origin:0 0;letter-spacing:0.162px;">07.08.2017 10:00:00</div>
<div class="t" style="top:500px;font-size:14px;line-height:14px;color:#333333;left:930px;transform:scaleX(0.928571);transform-origin:0 0;"><span style="letter-spacing:0.032px">Прохождение точки маршрута </span><span style="letter-spacing:0.183px">0000-000004 от 07.08.2017 9:32:00</span></div>
<div class="t" style="top:500px;font-size:14px;line-height:14px;color:#333333;left:1481px;transform:scaleX(0.928571);transform-origin:0 0;letter-spacing:-0.140px;">Выполнен</div>
<div class="t" style="top:500px;font-size:14px;line-height:14px;color:#333333;left:1568px;transform:scaleX(0.928571);transform-origin:0 0;letter-spacing:0.215px;">Соболь в581во199</div>
<div class="t" style="top:518px;font-size:14px;line-height:14px;color:#333333;left:1568px;transform:scaleX(0.928571);transform-origin:0 0;letter-spacing:0.054px;">Волчек</div>
<div class="a" style="left:256px;top:533px;width:1632px;height:1px;background:#eaeaea"></div>
<div class="a" style="left:442px;top:534px;width:1px;height:35px;background:#eaeaea"></div>
<div class="a" style="left:628px;top:534px;width:1px;height:35px;background:#eaeaea"></div>
<div class="a" style="left:742px;top:534px;width:1px;height:35px;background:#eaeaea"></div>
<div class="a" style="left:926px;top:534px;width:1px;height:35px;background:#eaeaea"></div>
<div class="a" style="left:1478px;top:534px;width:1px;height:35px;background:#eaeaea"></div>
<div class="a" style="left:1564px;top:534px;width:1px;height:35px;background:#eaeaea"></div>
<div class="a" style="left:1721px;top:534px;width:1px;height:35px;background:#eaeaea"></div>
<div class="a" style="left:1800px;top:534px;width:1px;height:35px;background:#eaeaea"></div>
<div class="a" style="left:1872px;top:534px;width:1px;height:35px;background:#eaeaea"></div>
<div class="a" style="left:628px;top:551px;width:298px;height:1px;background:#eaeaea"></div>
<div class="a" style="left:1564px;top:551px;width:157px;height:1px;background:#eaeaea"></div>
<div class="t" style="top:536px;font-size:14px;line-height:14px;color:#333333;left:274px;transform:scaleX(0.928571);transform-origin:0 0;letter-spacing:0.054px;">0000-000001</div>
<div class="t" style="top:536px;font-size:14px;line-height:14px;color:#333333;left:445px;transform:scaleX(0.928571);transform-origin:0 0;letter-spacing:0.162px;">06.08.2017 17:00:00</div>
<div class="t" style="top:536px;font-size:14px;line-height:14px;color:#333333;left:139px;width:600px;text-align:right;transform:scaleX(0.928571);transform-origin:100% 0;letter-spacing:0.054px;">61,303</div>
<div class="t" style="top:554px;font-size:14px;line-height:14px;color:#333333;left:139px;width:600px;text-align:right;transform:scaleX(0.928571);transform-origin:100% 0;letter-spacing:0.054px;">2,00</div>
<div class="t" style="top:536px;font-size:14px;line-height:14px;color:#333333;left:746px;transform:scaleX(0.928571);transform-origin:0 0;letter-spacing:0.162px;">07.08.2017 8:00:00</div>
<div class="t" style="top:554px;font-size:14px;line-height:14px;color:#333333;left:746px;transform:scaleX(0.928571);transform-origin:0 0;letter-spacing:0.162px;">07.08.2017 10:00:00</div>
<div class="t" style="top:536px;font-size:14px;line-height:14px;color:#333333;left:930px;transform:scaleX(0.928571);transform-origin:0 0;"><span style="letter-spacing:0.032px">Прохождение точки маршрута </span><span style="letter-spacing:0.183px">0000-000004 от 07.08.2017 9:32:00</span></div>
<div class="t" style="top:536px;font-size:14px;line-height:14px;color:#333333;left:1481px;transform:scaleX(0.928571);transform-origin:0 0;letter-spacing:-0.140px;">Выполнен</div>
<div class="t" style="top:536px;font-size:14px;line-height:14px;color:#333333;left:1568px;transform:scaleX(0.928571);transform-origin:0 0;letter-spacing:0.215px;">Соболь в581во199</div>
<div class="t" style="top:554px;font-size:14px;line-height:14px;color:#333333;left:1568px;transform:scaleX(0.928571);transform-origin:0 0;letter-spacing:0.054px;">Волчек</div>
<div class="a" style="left:256px;top:569px;width:1632px;height:1px;background:#eaeaea"></div>
<div class="a" style="left:442px;top:570px;width:1px;height:35px;background:#eaeaea"></div>
<div class="a" style="left:628px;top:570px;width:1px;height:35px;background:#eaeaea"></div>
<div class="a" style="left:742px;top:570px;width:1px;height:35px;background:#eaeaea"></div>
<div class="a" style="left:926px;top:570px;width:1px;height:35px;background:#eaeaea"></div>
<div class="a" style="left:1478px;top:570px;width:1px;height:35px;background:#eaeaea"></div>
<div class="a" style="left:1564px;top:570px;width:1px;height:35px;background:#eaeaea"></div>
<div class="a" style="left:1721px;top:570px;width:1px;height:35px;background:#eaeaea"></div>
<div class="a" style="left:1800px;top:570px;width:1px;height:35px;background:#eaeaea"></div>
<div class="a" style="left:1872px;top:570px;width:1px;height:35px;background:#eaeaea"></div>
<div class="a" style="left:628px;top:587px;width:298px;height:1px;background:#eaeaea"></div>
<div class="a" style="left:1564px;top:587px;width:157px;height:1px;background:#eaeaea"></div>
<div class="t" style="top:572px;font-size:14px;line-height:14px;color:#333333;left:274px;transform:scaleX(0.928571);transform-origin:0 0;letter-spacing:0.054px;">0000-000004</div>
<div class="t" style="top:572px;font-size:14px;line-height:14px;color:#333333;left:445px;transform:scaleX(0.928571);transform-origin:0 0;letter-spacing:0.162px;">15.08.2017 9:14:36</div>
<div class="t" style="top:572px;font-size:14px;line-height:14px;color:#333333;left:139px;width:600px;text-align:right;transform:scaleX(0.928571);transform-origin:100% 0;letter-spacing:0.054px;">111,504</div>
<div class="t" style="top:590px;font-size:14px;line-height:14px;color:#333333;left:139px;width:600px;text-align:right;transform:scaleX(0.928571);transform-origin:100% 0;letter-spacing:0.054px;">3,00</div>
<div class="t" style="top:572px;font-size:14px;line-height:14px;color:#333333;left:746px;transform:scaleX(0.928571);transform-origin:0 0;letter-spacing:0.162px;">15.08.2017 15:00:00</div>
<div class="t" style="top:590px;font-size:14px;line-height:14px;color:#333333;left:746px;transform:scaleX(0.928571);transform-origin:0 0;letter-spacing:0.162px;">15.08.2017 18:00:00</div>
<div class="t" style="top:572px;font-size:14px;line-height:14px;color:#333333;left:930px;transform:scaleX(0.928571);transform-origin:0 0;"><span style="letter-spacing:0.032px">Прохождение точки маршрута </span><span style="letter-spacing:0.183px">0000-000012 от 15.08.2017 18:00:00</span></div>
<div class="t" style="top:572px;font-size:14px;line-height:14px;color:#333333;left:1481px;transform:scaleX(0.928571);transform-origin:0 0;letter-spacing:-0.140px;">Выполнен</div>
<div class="t" style="top:572px;font-size:14px;line-height:14px;color:#333333;left:1568px;transform:scaleX(0.928571);transform-origin:0 0;letter-spacing:0.215px;">Газель в232вв197</div>
<div class="t" style="top:590px;font-size:14px;line-height:14px;color:#333333;left:1568px;transform:scaleX(0.928571);transform-origin:0 0;letter-spacing:0.054px;">Караванов С. В.</div>
<div class="t" style="top:572px;font-size:14px;line-height:14px;color:#333333;left:1197px;width:600px;text-align:right;transform:scaleX(0.928571);transform-origin:100% 0;letter-spacing:0.054px;">100,3</div>
<div class="t" style="top:572px;font-size:14px;line-height:14px;color:#333333;left:1269px;width:600px;text-align:right;transform:scaleX(0.928571);transform-origin:100% 0;letter-spacing:0.054px;">60</div>
<div class="a" style="left:256px;top:605px;width:1632px;height:1px;background:#eaeaea"></div>
<div class="a" style="left:442px;top:606px;width:1px;height:35px;background:#eaeaea"></div>
<div class="a" style="left:628px;top:606px;width:1px;height:35px;background:#eaeaea"></div>
<div class="a" style="left:742px;top:606px;width:1px;height:35px;background:#eaeaea"></div>
<div class="a" style="left:926px;top:606px;width:1px;height:35px;background:#eaeaea"></div>
<div class="a" style="left:1478px;top:606px;width:1px;height:35px;background:#eaeaea"></div>
<div class="a" style="left:1564px;top:606px;width:1px;height:35px;background:#eaeaea"></div>
<div class="a" style="left:1721px;top:606px;width:1px;height:35px;background:#eaeaea"></div>
<div class="a" style="left:1800px;top:606px;width:1px;height:35px;background:#eaeaea"></div>
<div class="a" style="left:1872px;top:606px;width:1px;height:35px;background:#eaeaea"></div>
<div class="a" style="left:628px;top:623px;width:298px;height:1px;background:#eaeaea"></div>
<div class="a" style="left:1564px;top:623px;width:157px;height:1px;background:#eaeaea"></div>
<div class="t" style="top:608px;font-size:14px;line-height:14px;color:#333333;left:274px;transform:scaleX(0.928571);transform-origin:0 0;letter-spacing:0.054px;">0000-000004</div>
<div class="t" style="top:608px;font-size:14px;line-height:14px;color:#333333;left:445px;transform:scaleX(0.928571);transform-origin:0 0;letter-spacing:0.162px;">15.08.2017 9:14:36</div>
<div class="t" style="top:608px;font-size:14px;line-height:14px;color:#333333;left:139px;width:600px;text-align:right;transform:scaleX(0.928571);transform-origin:100% 0;letter-spacing:0.054px;">111,504</div>
<div class="t" style="top:626px;font-size:14px;line-height:14px;color:#333333;left:139px;width:600px;text-align:right;transform:scaleX(0.928571);transform-origin:100% 0;letter-spacing:0.054px;">3,00</div>
<div class="t" style="top:608px;font-size:14px;line-height:14px;color:#333333;left:746px;transform:scaleX(0.928571);transform-origin:0 0;letter-spacing:0.162px;">15.08.2017 15:00:00</div>
<div class="t" style="top:626px;font-size:14px;line-height:14px;color:#333333;left:746px;transform:scaleX(0.928571);transform-origin:0 0;letter-spacing:0.162px;">15.08.2017 18:00:00</div>
<div class="t" style="top:608px;font-size:14px;line-height:14px;color:#333333;left:930px;transform:scaleX(0.928571);transform-origin:0 0;"><span style="letter-spacing:0.032px">Прохождение точки маршрута </span><span style="letter-spacing:0.183px">0000-000012 от 15.08.2017 18:00:00</span></div>
<div class="t" style="top:608px;font-size:14px;line-height:14px;color:#333333;left:1481px;transform:scaleX(0.928571);transform-origin:0 0;letter-spacing:-0.140px;">Выполнен</div>
<div class="t" style="top:608px;font-size:14px;line-height:14px;color:#333333;left:1568px;transform:scaleX(0.928571);transform-origin:0 0;letter-spacing:0.215px;">Газель в232вв197</div>
<div class="t" style="top:626px;font-size:14px;line-height:14px;color:#333333;left:1568px;transform:scaleX(0.928571);transform-origin:0 0;letter-spacing:0.054px;">Караванов С. В.</div>
<div class="a" style="left:256px;top:641px;width:1632px;height:1px;background:#eaeaea"></div>
<div class="a" style="left:442px;top:642px;width:1px;height:35px;background:#eaeaea"></div>
<div class="a" style="left:628px;top:642px;width:1px;height:35px;background:#eaeaea"></div>
<div class="a" style="left:742px;top:642px;width:1px;height:35px;background:#eaeaea"></div>
<div class="a" style="left:926px;top:642px;width:1px;height:35px;background:#eaeaea"></div>
<div class="a" style="left:1478px;top:642px;width:1px;height:35px;background:#eaeaea"></div>
<div class="a" style="left:1564px;top:642px;width:1px;height:35px;background:#eaeaea"></div>
<div class="a" style="left:1721px;top:642px;width:1px;height:35px;background:#eaeaea"></div>
<div class="a" style="left:1800px;top:642px;width:1px;height:35px;background:#eaeaea"></div>
<div class="a" style="left:1872px;top:642px;width:1px;height:35px;background:#eaeaea"></div>
<div class="a" style="left:628px;top:659px;width:298px;height:1px;background:#eaeaea"></div>
<div class="a" style="left:1564px;top:659px;width:157px;height:1px;background:#eaeaea"></div>
<div class="t" style="top:644px;font-size:14px;line-height:14px;color:#333333;left:274px;transform:scaleX(0.928571);transform-origin:0 0;letter-spacing:0.054px;">0000-000004</div>
<div class="t" style="top:644px;font-size:14px;line-height:14px;color:#333333;left:445px;transform:scaleX(0.928571);transform-origin:0 0;letter-spacing:0.162px;">15.08.2017 9:14:36</div>
<div class="t" style="top:644px;font-size:14px;line-height:14px;color:#333333;left:139px;width:600px;text-align:right;transform:scaleX(0.928571);transform-origin:100% 0;letter-spacing:0.054px;">111,504</div>
<div class="t" style="top:662px;font-size:14px;line-height:14px;color:#333333;left:139px;width:600px;text-align:right;transform:scaleX(0.928571);transform-origin:100% 0;letter-spacing:0.054px;">3,00</div>
<div class="t" style="top:644px;font-size:14px;line-height:14px;color:#333333;left:746px;transform:scaleX(0.928571);transform-origin:0 0;letter-spacing:0.162px;">15.08.2017 15:00:00</div>
<div class="t" style="top:662px;font-size:14px;line-height:14px;color:#333333;left:746px;transform:scaleX(0.928571);transform-origin:0 0;letter-spacing:0.162px;">15.08.2017 18:00:00</div>
<div class="t" style="top:644px;font-size:14px;line-height:14px;color:#333333;left:930px;transform:scaleX(0.928571);transform-origin:0 0;"><span style="letter-spacing:0.032px">Прохождение точки маршрута </span><span style="letter-spacing:0.183px">0000-000012 от 15.08.2017 18:00:00</span></div>
<div class="t" style="top:644px;font-size:14px;line-height:14px;color:#333333;left:1481px;transform:scaleX(0.928571);transform-origin:0 0;letter-spacing:-0.140px;">Выполнен</div>
<div class="t" style="top:644px;font-size:14px;line-height:14px;color:#333333;left:1568px;transform:scaleX(0.928571);transform-origin:0 0;letter-spacing:0.215px;">Газель в232вв197</div>
<div class="t" style="top:662px;font-size:14px;line-height:14px;color:#333333;left:1568px;transform:scaleX(0.928571);transform-origin:0 0;letter-spacing:0.054px;">Караванов С. В.</div>
<div class="a" style="left:256px;top:677px;width:1632px;height:1px;background:#eaeaea"></div>
<div class="a" style="left:1564px;top:678px;width:1px;height:17px;background:#eaeaea"></div>
<div class="a" style="left:1721px;top:678px;width:1px;height:17px;background:#eaeaea"></div>
<div class="a" style="left:1800px;top:678px;width:1px;height:17px;background:#eaeaea"></div>
<div class="a" style="left:1872px;top:678px;width:1px;height:17px;background:#eaeaea"></div>
<div class="t" style="top:680px;font-size:14px;line-height:14px;color:#333333;left:260px;transform:scaleX(0.928571);transform-origin:0 0;letter-spacing:0.054px;">ООО "Трасса"</div>
<div class="t" style="top:680px;font-size:14px;line-height:14px;color:#333333;left:1197px;width:600px;text-align:right;transform:scaleX(0.928571);transform-origin:100% 0;letter-spacing:0.054px;">134,384</div>
<div class="t" style="top:680px;font-size:14px;line-height:14px;color:#333333;left:1269px;width:600px;text-align:right;transform:scaleX(0.928571);transform-origin:100% 0;letter-spacing:0.054px;">72</div>
<div class="a" style="left:256px;top:695px;width:1632px;height:1px;background:#eaeaea"></div>
<div class="a" style="left:442px;top:696px;width:1px;height:35px;background:#eaeaea"></div>
<div class="a" style="left:628px;top:696px;width:1px;height:35px;background:#eaeaea"></div>
<div class="a" style="left:742px;top:696px;width:1px;height:35px;background:#eaeaea"></div>
<div class="a" style="left:926px;top:696px;width:1px;height:35px;background:#eaeaea"></div>
<div class="a" style="left:1478px;top:696px;width:1px;height:35px;background:#eaeaea"></div>
<div class="a" style="left:1564px;top:696px;width:1px;height:35px;background:#eaeaea"></div>
<div class="a" style="left:1721px;top:696px;width:1px;height:35px;background:#eaeaea"></div>
<div class="a" style="left:1800px;top:696px;width:1px;height:35px;background:#eaeaea"></div>
<div class="a" style="left:1872px;top:696px;width:1px;height:35px;background:#eaeaea"></div>
<div class="a" style="left:628px;top:713px;width:298px;height:1px;background:#eaeaea"></div>
<div class="a" style="left:1564px;top:713px;width:157px;height:1px;background:#eaeaea"></div>
<div class="t" style="top:698px;font-size:14px;line-height:14px;color:#333333;left:274px;transform:scaleX(0.928571);transform-origin:0 0;letter-spacing:0.054px;">0000-000002</div>
<div class="t" style="top:698px;font-size:14px;line-height:14px;color:#333333;left:445px;transform:scaleX(0.928571);transform-origin:0 0;letter-spacing:0.162px;">07.08.2017 7:05:00</div>
<div class="t" style="top:716px;font-size:14px;line-height:14px;color:#333333;left:139px;width:600px;text-align:right;transform:scaleX(0.928571);transform-origin:100% 0;letter-spacing:0.054px;">5,00</div>
<div class="t" style="top:698px;font-size:14px;line-height:14px;color:#333333;left:746px;transform:scaleX(0.928571);transform-origin:0 0;letter-spacing:0.162px;">07.08.2017 10:00:00</div>
<div class="t" style="top:716px;font-size:14px;line-height:14px;color:#333333;left:746px;transform:scaleX(0.928571);transform-origin:0 0;letter-spacing:0.162px;">07.08.2017 15:00:00</div>
<div class="t" style="top:698px;font-size:14px;line-height:14px;color:#333333;left:930px;transform:scaleX(0.928571);transform-origin:0 0;"><span style="letter-spacing:0.032px">Прохождение точки маршрута </span><span style="letter-spacing:0.183px">0000-000006 от 07.08.2017 12:30:00</span></div>
<div class="t" style="top:698px;font-size:14px;line-height:14px;color:#333333;left:1481px;transform:scaleX(0.928571);transform-origin:0 0;letter-spacing:-0.140px;">Выполнен</div>
<div class="t" style="top:698px;font-size:14px;line-height:14px;color:#333333;left:1568px;transform:scaleX(0.928571);transform-origin:0 0;letter-spacing:0.215px;">Поезд 664-М</div>
<div class="t" style="top:716px;font-size:14px;line-height:14px;color:#333333;left:1568px;transform:scaleX(0.928571);transform-origin:0 0;letter-spacing:0.054px;">Габбасов</div>
<div class="t" style="top:698px;font-size:14px;line-height:14px;color:#333333;left:1197px;width:600px;text-align:right;transform:scaleX(0.928571);transform-origin:100% 0;letter-spacing:0.054px;">34,084</div>
<div class="t" style="top:698px;font-size:14px;line-height:14px;color:#333333;left:1269px;width:600px;text-align:right;transform:scaleX(0.928571);transform-origin:100% 0;letter-spacing:0.054px;">12</div>
<div class="a" style="left:256px;top:731px;width:1632px;height:1px;background:#eaeaea"></div>
<div class="a" style="left:442px;top:732px;width:1px;height:35px;background:#eaeaea"></div>
<div class="a" style="left:628px;top:732px;width:1px;height:35px;background:#eaeaea"></div>
<div class="a" style="left:742px;top:732px;width:1px;height:35px;background:#eaeaea"></div>
<div class="a" style="left:926px;top:732px;width:1px;height:35px;background:#eaeaea"></div>
<div class="a" style="left:1478px;top:732px;width:1px;height:35px;background:#eaeaea"></div>
<div class="a" style="left:1564px;top:732px;width:1px;height:35px;background:#eaeaea"></div>
<div class="a" style="left:1721px;top:732px;width:1px;height:35px;background:#eaeaea"></div>
<div class="a" style="left:1800px;top:732px;width:1px;height:35px;background:#eaeaea"></div>
<div class="a" style="left:1872px;top:732px;width:1px;height:35px;background:#eaeaea"></div>
<div class="a" style="left:628px;top:749px;width:298px;height:1px;background:#eaeaea"></div>
<div class="a" style="left:1564px;top:749px;width:157px;height:1px;background:#eaeaea"></div>
<div class="t" style="top:734px;font-size:14px;line-height:14px;color:#333333;left:274px;transform:scaleX(0.928571);transform-origin:0 0;letter-spacing:0.054px;">0000-000002</div>
<div class="t" style="top:734px;font-size:14px;line-height:14px;color:#333333;left:445px;transform:scaleX(0.928571);transform-origin:0 0;letter-spacing:0.162px;">07.08.2017 7:05:00</div>
<div class="t" style="top:752px;font-size:14px;line-height:14px;color:#333333;left:139px;width:600px;text-align:right;transform:scaleX(0.928571);transform-origin:100% 0;letter-spacing:0.054px;">5,00</div>
<div class="t" style="top:734px;font-size:14px;line-height:14px;color:#333333;left:746px;transform:scaleX(0.928571);transform-origin:0 0;letter-spacing:0.162px;">07.08.2017 10:00:00</div>
<div class="t" style="top:752px;font-size:14px;line-height:14px;color:#333333;left:746px;transform:scaleX(0.928571);transform-origin:0 0;letter-spacing:0.162px;">07.08.2017 15:00:00</div>
<div class="t" style="top:734px;font-size:14px;line-height:14px;color:#333333;left:930px;transform:scaleX(0.928571);transform-origin:0 0;"><span style="letter-spacing:0.032px">Прохождение точки маршрута </span><span style="letter-spacing:0.183px">0000-000006 от 07.08.2017 12:30:00</span></div>
<div class="t" style="top:734px;font-size:14px;line-height:14px;color:#333333;left:1481px;transform:scaleX(0.928571);transform-origin:0 0;letter-spacing:-0.140px;">Выполнен</div>
<div class="t" style="top:734px;font-size:14px;line-height:14px;color:#333333;left:1568px;transform:scaleX(0.928571);transform-origin:0 0;letter-spacing:0.215px;">Поезд 664-М</div>
<div class="t" style="top:752px;font-size:14px;line-height:14px;color:#333333;left:1568px;transform:scaleX(0.928571);transform-origin:0 0;letter-spacing:0.054px;">Габбасов</div>
<div class="a" style="left:256px;top:767px;width:1632px;height:1px;background:#eaeaea"></div>
<div class="a" style="left:442px;top:768px;width:1px;height:35px;background:#eaeaea"></div>
<div class="a" style="left:628px;top:768px;width:1px;height:35px;background:#eaeaea"></div>
<div class="a" style="left:742px;top:768px;width:1px;height:35px;background:#eaeaea"></div>
<div class="a" style="left:926px;top:768px;width:1px;height:35px;background:#eaeaea"></div>
<div class="a" style="left:1478px;top:768px;width:1px;height:35px;background:#eaeaea"></div>
<div class="a" style="left:1564px;top:768px;width:1px;height:35px;background:#eaeaea"></div>
<div class="a" style="left:1721px;top:768px;width:1px;height:35px;background:#eaeaea"></div>
<div class="a" style="left:1800px;top:768px;width:1px;height:35px;background:#eaeaea"></div>
<div class="a" style="left:1872px;top:768px;width:1px;height:35px;background:#eaeaea"></div>
<div class="a" style="left:628px;top:785px;width:298px;height:1px;background:#eaeaea"></div>
<div class="a" style="left:1564px;top:785px;width:157px;height:1px;background:#eaeaea"></div>
<div class="t" style="top:770px;font-size:14px;line-height:14px;color:#333333;left:274px;transform:scaleX(0.928571);transform-origin:0 0;letter-spacing:0.054px;">0000-000003</div>
<div class="t" style="top:770px;font-size:14px;line-height:14px;color:#333333;left:445px;transform:scaleX(0.928571);transform-origin:0 0;letter-spacing:0.162px;">15.08.2017 8:46:31</div>
<div class="t" style="top:788px;font-size:14px;line-height:14px;color:#333333;left:139px;width:600px;text-align:right;transform:scaleX(0.928571);transform-origin:100% 0;letter-spacing:0.054px;">4,00</div>
<div class="t" style="top:770px;font-size:14px;line-height:14px;color:#333333;left:746px;transform:scaleX(0.928571);transform-origin:0 0;letter-spacing:0.162px;">15.08.2017 11:00:00</div>
<div class="t" style="top:788px;font-size:14px;line-height:14px;color:#333333;left:746px;transform:scaleX(0.928571);transform-origin:0 0;letter-spacing:0.162px;">15.08.2017 15:00:00</div>
<div class="t" style="top:770px;font-size:14px;line-height:14px;color:#333333;left:930px;transform:scaleX(0.928571);transform-origin:0 0;"><span style="letter-spacing:0.032px">Прохождение точки маршрута </span><span style="letter-spacing:0.183px">0000-000009 от 15.08.2017 15:00:00</span></div>
<div class="t" style="top:770px;font-size:14px;line-height:14px;color:#333333;left:1481px;transform:scaleX(0.928571);transform-origin:0 0;letter-spacing:-0.140px;">Выполнен</div>
<div class="t" style="top:770px;font-size:14px;line-height:14px;color:#333333;left:1568px;transform:scaleX(0.928571);transform-origin:0 0;letter-spacing:0.215px;">Поезд 664-М</div>
<div class="t" style="top:788px;font-size:14px;line-height:14px;color:#333333;left:1568px;transform:scaleX(0.928571);transform-origin:0 0;letter-spacing:0.054px;">Габбасов</div>
<div class="t" style="top:770px;font-size:14px;line-height:14px;color:#333333;left:1197px;width:600px;text-align:right;transform:scaleX(0.928571);transform-origin:100% 0;letter-spacing:0.054px;">100,3</div>
<div class="t" style="top:770px;font-size:14px;line-height:14px;color:#333333;left:1269px;width:600px;text-align:right;transform:scaleX(0.928571);transform-origin:100% 0;letter-spacing:0.054px;">60</div>
<div class="a" style="left:256px;top:803px;width:1632px;height:1px;background:#eaeaea"></div>
<div class="a" style="left:442px;top:804px;width:1px;height:35px;background:#eaeaea"></div>
<div class="a" style="left:628px;top:804px;width:1px;height:35px;background:#eaeaea"></div>
<div class="a" style="left:742px;top:804px;width:1px;height:35px;background:#eaeaea"></div>
<div class="a" style="left:926px;top:804px;width:1px;height:35px;background:#eaeaea"></div>
<div class="a" style="left:1478px;top:804px;width:1px;height:35px;background:#eaeaea"></div>
<div class="a" style="left:1564px;top:804px;width:1px;height:35px;background:#eaeaea"></div>
<div class="a" style="left:1721px;top:804px;width:1px;height:35px;background:#eaeaea"></div>
<div class="a" style="left:1800px;top:804px;width:1px;height:35px;background:#eaeaea"></div>
<div class="a" style="left:1872px;top:804px;width:1px;height:35px;background:#eaeaea"></div>
<div class="a" style="left:628px;top:821px;width:298px;height:1px;background:#eaeaea"></div>
<div class="a" style="left:1564px;top:821px;width:157px;height:1px;background:#eaeaea"></div>
<div class="t" style="top:806px;font-size:14px;line-height:14px;color:#333333;left:274px;transform:scaleX(0.928571);transform-origin:0 0;letter-spacing:0.054px;">0000-000003</div>
<div class="t" style="top:806px;font-size:14px;line-height:14px;color:#333333;left:445px;transform:scaleX(0.928571);transform-origin:0 0;letter-spacing:0.162px;">15.08.2017 8:46:31</div>
<div class="t" style="top:824px;font-size:14px;line-height:14px;color:#333333;left:139px;width:600px;text-align:right;transform:scaleX(0.928571);transform-origin:100% 0;letter-spacing:0.054px;">4,00</div>
<div class="t" style="top:806px;font-size:14px;line-height:14px;color:#333333;left:746px;transform:scaleX(0.928571);transform-origin:0 0;letter-spacing:0.162px;">15.08.2017 11:00:00</div>
<div class="t" style="top:824px;font-size:14px;line-height:14px;color:#333333;left:746px;transform:scaleX(0.928571);transform-origin:0 0;letter-spacing:0.162px;">15.08.2017 15:00:00</div>
<div class="t" style="top:806px;font-size:14px;line-height:14px;color:#333333;left:930px;transform:scaleX(0.928571);transform-origin:0 0;"><span style="letter-spacing:0.032px">Прохождение точки маршрута </span><span style="letter-spacing:0.183px">0000-000009 от 15.08.2017 15:00:00</span></div>
<div class="t" style="top:806px;font-size:14px;line-height:14px;color:#333333;left:1481px;transform:scaleX(0.928571);transform-origin:0 0;letter-spacing:-0.140px;">Выполнен</div>
<div class="t" style="top:806px;font-size:14px;line-height:14px;color:#333333;left:1568px;transform:scaleX(0.928571);transform-origin:0 0;letter-spacing:0.215px;">Поезд 664-М</div>
<div class="t" style="top:824px;font-size:14px;line-height:14px;color:#333333;left:1568px;transform:scaleX(0.928571);transform-origin:0 0;letter-spacing:0.054px;">Габбасов</div>
<div class="a" style="left:256px;top:839px;width:1632px;height:1px;background:#eaeaea"></div>
<div class="a" style="left:442px;top:840px;width:1px;height:35px;background:#eaeaea"></div>
<div class="a" style="left:628px;top:840px;width:1px;height:35px;background:#eaeaea"></div>
<div class="a" style="left:742px;top:840px;width:1px;height:35px;background:#eaeaea"></div>
<div class="a" style="left:926px;top:840px;width:1px;height:35px;background:#eaeaea"></div>
<div class="a" style="left:1478px;top:840px;width:1px;height:35px;background:#eaeaea"></div>
<div class="a" style="left:1564px;top:840px;width:1px;height:35px;background:#eaeaea"></div>
<div class="a" style="left:1721px;top:840px;width:1px;height:35px;background:#eaeaea"></div>
<div class="a" style="left:1800px;top:840px;width:1px;height:35px;background:#eaeaea"></div>
<div class="a" style="left:1872px;top:840px;width:1px;height:35px;background:#eaeaea"></div>
<div class="a" style="left:628px;top:857px;width:298px;height:1px;background:#eaeaea"></div>
<div class="a" style="left:1564px;top:857px;width:157px;height:1px;background:#eaeaea"></div>
<div class="t" style="top:842px;font-size:14px;line-height:14px;color:#333333;left:274px;transform:scaleX(0.928571);transform-origin:0 0;letter-spacing:0.054px;">0000-000003</div>
<div class="t" style="top:842px;font-size:14px;line-height:14px;color:#333333;left:445px;transform:scaleX(0.928571);transform-origin:0 0;letter-spacing:0.162px;">15.08.2017 8:46:31</div>
<div class="t" style="top:860px;font-size:14px;line-height:14px;color:#333333;left:139px;width:600px;text-align:right;transform:scaleX(0.928571);transform-origin:100% 0;letter-spacing:0.054px;">4,00</div>
<div class="t" style="top:842px;font-size:14px;line-height:14px;color:#333333;left:746px;transform:scaleX(0.928571);transform-origin:0 0;letter-spacing:0.162px;">15.08.2017 11:00:00</div>
<div class="t" style="top:860px;font-size:14px;line-height:14px;color:#333333;left:746px;transform:scaleX(0.928571);transform-origin:0 0;letter-spacing:0.162px;">15.08.2017 15:00:00</div>
<div class="t" style="top:842px;font-size:14px;line-height:14px;color:#333333;left:930px;transform:scaleX(0.928571);transform-origin:0 0;"><span style="letter-spacing:0.032px">Прохождение точки маршрута </span><span style="letter-spacing:0.183px">0000-000009 от 15.08.2017 15:00:00</span></div>
<div class="t" style="top:842px;font-size:14px;line-height:14px;color:#333333;left:1481px;transform:scaleX(0.928571);transform-origin:0 0;letter-spacing:-0.140px;">Выполнен</div>
<div class="t" style="top:842px;font-size:14px;line-height:14px;color:#333333;left:1568px;transform:scaleX(0.928571);transform-origin:0 0;letter-spacing:0.215px;">Поезд 664-М</div>
<div class="t" style="top:860px;font-size:14px;line-height:14px;color:#333333;left:1568px;transform:scaleX(0.928571);transform-origin:0 0;letter-spacing:0.054px;">Габбасов</div>
<div class="a" style="left:256px;top:875px;width:1632px;height:1px;background:#eaeaea"></div>
<div class="a" style="left:1564px;top:876px;width:1px;height:21px;background:#eaeaea"></div>
<div class="a" style="left:1721px;top:876px;width:1px;height:21px;background:#eaeaea"></div>
<div class="a" style="left:1800px;top:876px;width:1px;height:21px;background:#eaeaea"></div>
<div class="a" style="left:1872px;top:876px;width:1px;height:21px;background:#eaeaea"></div>
<div class="t" style="top:879px;font-size:16px;line-height:16px;color:#333333;left:260px;letter-spacing:0.050px;">Итого</div>
<div class="t" style="top:879px;font-size:16px;line-height:16px;color:#333333;left:1197px;width:600px;text-align:right;letter-spacing:0.500px;">469,968</div>
<div class="t" style="top:879px;font-size:16px;line-height:16px;color:#333333;left:1269px;width:600px;text-align:right;letter-spacing:0.300px;">146,08</div>
<div class="a" style="left:256px;top:897px;width:1632px;height:1px;background:#eaeaea"></div>
<div class="a" style="left:235px;top:220px;width:1px;height:46px;background:#c8c8c8"></div>
<div class="a" style="left:235px;top:266px;width:21px;height:1px;background:#c8c8c8"></div>
<div class="a" style="left:229px;top:209px;width:12px;height:12px;border:1px solid #c8c8c8;border-radius:2px;background:linear-gradient(#fff 50%,#f0f0f0)"></div>
<div class="a" style="left:231px;top:214px;width:8px;height:1px;background:#8a8a8a"></div>
<div class="a" style="left:235px;top:422px;width:1px;height:255px;background:#c8c8c8"></div>
<div class="a" style="left:235px;top:677px;width:21px;height:1px;background:#c8c8c8"></div>
<div class="a" style="left:229px;top:411px;width:12px;height:12px;border:1px solid #c8c8c8;border-radius:2px;background:linear-gradient(#fff 50%,#f0f0f0)"></div>
<div class="a" style="left:231px;top:416px;width:8px;height:1px;background:#8a8a8a"></div>
<div class="a" style="left:235px;top:692px;width:1px;height:183px;background:#c8c8c8"></div>
<div class="a" style="left:235px;top:875px;width:21px;height:1px;background:#c8c8c8"></div>
<div class="a" style="left:229px;top:681px;width:12px;height:12px;border:1px solid #c8c8c8;border-radius:2px;background:linear-gradient(#fff 50%,#f0f0f0)"></div>
<div class="a" style="left:231px;top:686px;width:8px;height:1px;background:#8a8a8a"></div>
<div class="a" style="left:1040px;top:930px;width:86px;height:25px;border:2px solid #f7cf26;background:#f2f2f2"></div>
<div class="a" style="left:1891px;top:229px;width:8px;height:755px;border-radius:4px;background:#9b9b9b"></div>
<svg class="a" style="left:1890px;top:212px;" width="10" height="10" viewBox="0 0 10 10"><path d="M3,7 L5.2,3.4 L7.4,7z" fill="#b8b8b8"/></svg>
<svg class="a" style="left:1890px;top:990px;" width="10" height="10" viewBox="0 0 10 10"><path d="M3,3 L7.4,3 L5.2,6.8z" fill="#555"/></svg>
<div class="a" style="left:250px;top:1009px;width:1616px;height:8px;border-radius:4px;background:#d9d9d9"></div>
<div class="a" style="left:250px;top:1009px;width:1527px;height:8px;border-radius:4px;background:#9b9b9b"></div>
<svg class="a" style="left:233px;top:1008px;" width="10" height="10" viewBox="0 0 10 10"><path d="M7,3 L3.4,5.2 L7,7.4z" fill="#b8b8b8"/></svg>
<svg class="a" style="left:1872px;top:1008px;" width="10" height="10" viewBox="0 0 10 10"><path d="M3,2.8 L6.8,5.2 L3,7.6z" fill="#555"/></svg>
<svg class="a" style="left:0px;top:64px;" width="50" height="320" viewBox="0 0 50 320"><g fill="#474747" stroke="none"><rect x="18" y="11" width="14" height="1.6"/><rect x="18" y="15" width="14" height="1.6"/><rect x="18" y="18.7" width="14" height="1.6"/><rect x="18" y="23" width="14" height="1.6"/><rect x="18" y="46.2" width="6.3" height="6"/><rect x="25.3" y="46.2" width="6" height="6"/><rect x="18" y="53" width="6.3" height="5.6"/><rect x="25.3" y="53" width="6" height="5.6"/><rect x="17" y="58.3" width="15" height="1.6"/><rect x="24.3" y="86.2" width="2" height="1.6"/><rect x="27.3" y="86.2" width="2" height="1.6"/><rect x="30.3" y="86.2" width="1.7" height="1.6"/><rect x="20.8" y="89.3" width="2" height="1.6"/><rect x="24.3" y="89.3" width="2" height="1.6"/><rect x="27.3" y="89.3" width="2" height="1.6"/><rect x="30.3" y="89.3" width="1.7" height="1.6"/><rect x="20.8" y="92.4" width="2" height="1.6"/><rect x="24.3" y="92.4" width="2" height="1.6"/><rect x="27.3" y="92.4" width="2" height="1.6"/><rect x="18.4" y="82.3" width="14.3" height="2.4"/><rect x="17" y="119" width="10.3" height="8.2"/><path d="M27.3,120 H31 L33,122.5 V127.2 H27.3 Z"/><circle cx="20.5" cy="128" r="1.9"/><circle cx="29.4" cy="128" r="1.9"/><circle cx="27.7" cy="161.4" r="5.4"/><rect x="18.8" y="261.2" width="8.9" height="10.7"/></g><g fill="none" stroke="#474747" stroke-width="1.1"><rect x="18.6" y="81" width="13.6" height="14.6" rx="1"/><path d="M21.6,79.6 V82.4 M29.6,79.6 V82.4" stroke-width="1.6"/><path d="M26.3,155.5 V152.6 H18.7 V162.6 H22.3"/><path d="M20.6,153.2 V151.6 H24.4 V153.2" stroke-width="1.2"/><path d="M20.5,155.7 H24.5 M20.5,158.2 H23 M20.5,160.6 H22.3"/><path d="M21.9,191.7 L25.6,194.9" stroke-width="2.4" stroke-linecap="round"/><path d="M26.5,190.5 L29,188 M19,198.1 L21.5,195.6" stroke-width="1.5" stroke-linecap="round"/><path d="M25.6,198.6 A3.4,3.4 0 0 0 29,195.2 M25.2,200.8 A5.6,5.6 0 0 0 30.8,195.2" stroke="#8f8a68" stroke-width="1"/><rect x="21.6" y="223.5" width="6.8" height="13" rx="1.3"/><path d="M21.6,234 H28.4" stroke-width="0.9"/><path d="M20.5,260.1 H29 V270.2" stroke-width="0.9"/><path d="M22.5,258.7 H30.8 V268.8" stroke-width="0.9"/><circle cx="25" cy="300.6" r="3.8" stroke-width="2"/></g><g fill="none" stroke="#fbed9e" stroke-width="1.1"><path d="M26.4,166 V157.8 H28.6 A1.7,1.7 0 0 1 28.6,161.2 H25.2 M25.2,163.4 H29"/></g><path d="M28.3,121 H30.5 L31.8,123 H28.3 Z" fill="#fbed9e"/><g stroke="#474747" stroke-width="2.2"><path d="M25,293.6 V296 M25,305.2 V307.6 M18,300.6 H20.4 M29.6,300.6 H32 M20.05,295.65 L21.75,297.35 M28.25,303.85 L29.95,305.55 M20.05,305.55 L21.75,303.85 M28.25,297.35 L29.95,295.65"/></g></svg>
<svg class="a" style="left:0px;top:0px;" width="1" height="1" viewBox="0 0 1 1"><path d="M496.8,187.3 V176 Q496.8,174.6 498.2,174.6 H501 L502.5,176.2 H510 Q510.6,176.2 510.6,176.8 V187.3 Z" fill="#ffd958" stroke="#d9a458" stroke-width="0.9"/><path d="M496.8,179.2 H510.6" stroke="#d9a458" stroke-width="0.8"/><path d="M504,180 H509.8 L512.2,182.4 V190.3 H504 Z" fill="#fff" stroke="#b8b8b8" stroke-width="0.9"/><rect x="506" y="184.6" width="2" height="3.6" fill="#e05a3a"/><rect x="508.2" y="184.6" width="2" height="3.6" fill="#4caf50"/></svg>
<svg class="a" style="left:0px;top:0px;" width="1" height="1" viewBox="0 0 1 1"><path d="M657.5,174.3 V187" stroke="#e9a654" stroke-width="1.2"/><path d="M655.2,186.6 H659.8 L657.5,189.6Z" fill="#e2573a"/><rect x="663.2" y="176" width="7.1" height="3.6" fill="#7a7a7a"/><rect x="663.2" y="180.3" width="7.1" height="4.2" fill="#c9c9c9"/><rect x="663.2" y="185" width="7.1" height="1.1" fill="#6a6a6a"/><rect x="664.8" y="187.2" width="5.5" height="0.8" fill="#a0a0a0"/><rect x="664.8" y="189" width="5.5" height="0.8" fill="#a0a0a0"/><rect x="661.2" y="176" width="0.9" height="3.4" fill="#777"/><rect x="661.2" y="185" width="0.9" height="1" fill="#777"/></svg>
<svg class="a" style="left:0px;top:0px;" width="1" height="1" viewBox="0 0 1 1"><path d="M687.5,177 V189" stroke="#e9a654" stroke-width="1.2"/><path d="M685,177.4 H690 L687.5,174.3Z" fill="#e2573a"/><rect x="693.2" y="176" width="6.8" height="5.8" fill="#858585"/><rect x="691.2" y="176" width="0.9" height="5.6" fill="#777"/></svg>
<svg class="a" style="left:0px;top:0px;" width="1" height="1" viewBox="0 0 1 1"><path d="M740.3,180.5 V175.1 H745.9 L747.6,176.8 V180.5" fill="#fff" stroke="#7d8fae" stroke-width="0.8"/><rect x="737" y="180.2" width="14" height="6.8" rx="1.6" fill="#4b6d9e"/><path d="M740.3,184.2 H747.7 V189.4 H740.3 Z" fill="#fff" stroke="#8090b0" stroke-width="0.8"/></svg>
<svg class="a" style="left:0px;top:0px;" width="1" height="1" viewBox="0 0 1 1"><path d="M774,189.5 H768.4 V175.2 H775.9 L779.4,178.6 V181" fill="#f6f6f6" stroke="#8595b5" stroke-width="0.9"/><circle cx="776.1" cy="184.1" r="2.9" fill="#fff" stroke="#2a4a7c" stroke-width="1.7"/><path d="M778.2,186.3 L781.2,189.3" stroke="#253f6e" stroke-width="2"/></svg>
<svg class="a" style="left:0px;top:0px;" width="1" height="1" viewBox="0 0 1 1"><path d="M819,176 H832.2 V188.8 H820.4 L819,187.4 Z" fill="#6d9fd6" stroke="#5a88c0" stroke-width="0.6"/><rect x="822.3" y="177" width="7.2" height="4.4" fill="#fff"/><rect x="823.3" y="178.3" width="5.2" height="1" fill="#a8c0e0"/><rect x="822.7" y="184" width="6.3" height="4.8" fill="#d0d0d0"/><rect x="823.3" y="185" width="1.6" height="3.8" fill="#4a7cc0"/></svg>
<svg class="a" style="left:0px;top:0px;" width="1" height="1" viewBox="0 0 1 1"><rect x="858.4" y="177.8" width="13.3" height="8.9" fill="#edc764" stroke="#d4a444" stroke-width="0.8"/><path d="M858.6,178 L865,183 L871.5,178" fill="none" stroke="#c99a40" stroke-width="0.8"/><path d="M859.5,178.3 H870.6 L865,182.2Z" fill="#f3da8a"/></svg>
<div class="a" style="left:0px;top:0px;width:1920px;height:1px;background:#f3f3f3"></div>
<div class="a" style="left:0px;top:0px;width:1px;height:121px;background:#f3f3f3"></div>
</body></html>
